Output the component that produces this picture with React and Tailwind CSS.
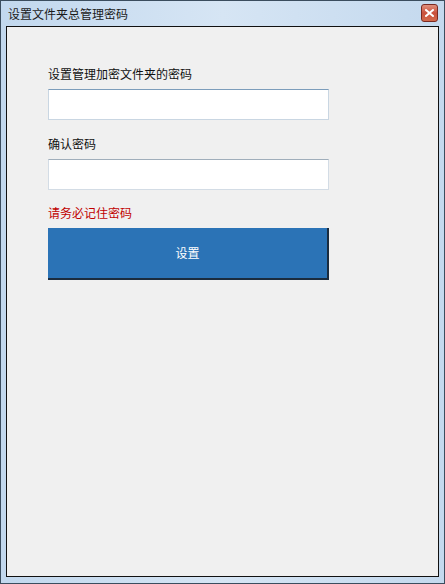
export default function App() {
  const font = { fontFamily: '"Noto Sans CJK SC", "Noto Sans", sans-serif' };

  return (
    <div
      className="w-[445px] h-[584px] flex flex-col border border-[#3b4d5e] bg-gradient-to-r from-[#c2d8ee] via-[#d6e5f4] to-[#c4d9ee] text-[12px] leading-[14px] text-[#111]"
      style={font}
    >
      {/* title bar */}
      <div className="h-[25px] flex items-center justify-between pl-[7px] pr-[6px] shrink-0">
        <span className="text-[12px] text-[#1b1b1b]">设置文件夹总管理密码</span>
        <div className="w-[17px] h-[18px] mt-[-2px] rounded-[3px] border border-[#7a2a22] bg-gradient-to-b from-[#e0907e] via-[#c9503c] to-[#d36a4c] flex items-center justify-center">
          <svg width="9" height="8" viewBox="0 0 9 8">
            <path d="M1 1 L8 7 M8 1 L1 7" stroke="#fff" strokeWidth="2" strokeLinecap="square" />
          </svg>
        </div>
      </div>

      {/* client area */}
      <div className="flex-1 mx-[5px] mb-[6px] border border-[#111] bg-[#f0f0f0] pl-[41px] pt-[40px] flex flex-col">
        <label className="h-[14px]">设置管理加密文件夹的密码</label>
        <input
          type="password"
          className="mt-[8px] w-[281px] h-[31px] bg-white border border-[#c9d6e2] border-t-[#7c9dbb] outline-none"
        />
        <label className="mt-[17px] h-[14px]">确认密码</label>
        <input
          type="password"
          className="mt-[8px] w-[281px] h-[31px] bg-white border border-[#d3dce5] border-t-[#a0aebb] outline-none"
        />
        <span className="mt-[16px] h-[14px] text-[#c00000]">请务必记住密码</span>
        <button
          type="button"
          className="mt-[8px] w-[281px] h-[52px] bg-[#2b73b6] border-r-2 border-b-2 border-[#1b2c3e] text-white text-[12px]"
        >
          设置
        </button>
      </div>
    </div>
  );
}
